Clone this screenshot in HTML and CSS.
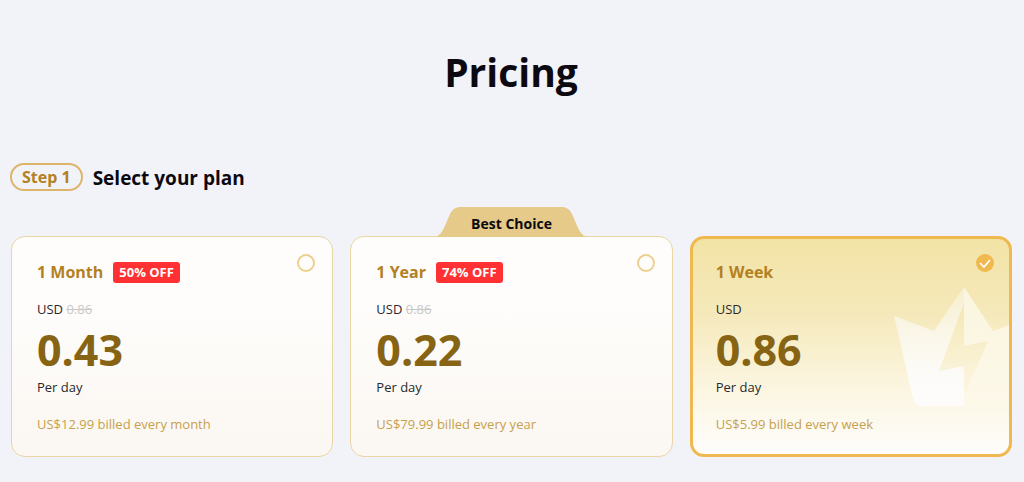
FILE: index.html
```html
<!DOCTYPE html>
<html lang="en">
<head>
<meta charset="utf-8">
<meta name="viewport" content="width=device-width, initial-scale=1">
<title>Pricing</title>
<link rel="stylesheet" href="styles.css">
</head>
<body>
<main class="pricing">
  <h1 class="page-title">Pricing</h1>
  <form>
    <header class="step">
      <span class="step-badge">Step 1</span>
      <h2 class="step-title">Select your plan</h2>
    </header>
    <div class="plans">
      <label class="plan" for="month">
        <span class="plan-head">
          <span class="plan-name">1 Month</span>
          <span class="discount">50% OFF</span>
          <input class="plan-radio" type="radio" name="plan" id="month">
        </span>
        <span class="currency">USD <s class="old-price">0.86</s></span>
        <span class="price">0.43</span>
        <span class="period">Per day</span>
        <span class="billing">US$12.99 billed every month</span>
      </label>
      <label class="plan" for="year">
        <span class="best">
          <svg class="best-shape" viewBox="0 0 150 30" preserveAspectRatio="none" aria-hidden="true"><path d="M0 30C4 28 6 25 8 21L14 7C17 2 19 0 25 0H125C131 0 133 2 136 7L142 21C144 25 146 28 150 30Z" fill="#e5ca89"/></svg>
          <span class="best-text">Best Choice</span>
        </span>
        <span class="plan-head">
          <span class="plan-name">1 Year</span>
          <span class="discount">74% OFF</span>
          <input class="plan-radio" type="radio" name="plan" id="year">
        </span>
        <span class="currency">USD <s class="old-price">0.86</s></span>
        <span class="price">0.22</span>
        <span class="period">Per day</span>
        <span class="billing">US$79.99 billed every year</span>
      </label>
      <label class="plan plan-selected" for="week">
        <svg class="crown" viewBox="0 0 116 120" aria-hidden="true">
          <defs>
            <linearGradient id="crown-left" x1="0" y1="0" x2="0" y2="1">
              <stop offset="0" stop-color="#fcfaf6" stop-opacity=".4"/>
              <stop offset=".85" stop-color="#fdfcfb"/>
            </linearGradient>
          </defs>
          <path fill="url(#crown-left)" d="M71 1V17L46 85L71 80V120H29Q22 120 20 112L1 30L41 45Z"/>
          <path fill="#fcf9ea" fill-opacity=".8" d="M71 1L100 45L141 30L121 120H71V110L95 55L71 60Z"/>
        </svg>
        <span class="plan-head">
          <span class="plan-name">1 Week</span>
          <input class="plan-radio" type="radio" name="plan" id="week" checked>
          <svg class="tick" viewBox="0 0 18 18" aria-hidden="true"><path d="M4 9L8 13L14 6" fill="none" stroke="#fff" stroke-width="1.7"/></svg>
        </span>
        <span class="currency">USD</span>
        <span class="price">0.86</span>
        <span class="period">Per day</span>
        <span class="billing">US$5.99 billed every week</span>
      </label>
    </div>
  </form>
</main>
</body>
</html>
```

FILE: styles.css
```css
* { box-sizing: border-box; }

body {
  margin: 0;
  background: #f2f3f8;
  color: #0c0a10;
  font-family: "Segoe UI", "Open Sans", "Noto Sans", sans-serif;
}

.pricing { padding: 44px 12px 26px 10px; }

.page-title {
  margin: 0;
  text-align: center;
  font-size: 39px;
  line-height: 56px;
  font-weight: 700;
}

.step {
  display: flex;
  align-items: center;
  gap: 10px;
  margin: 62px 0 44px;
}

.step-badge {
  padding: 0 10px;
  border: 2px solid #dcb56b;
  border-radius: 14px;
  color: #b38022;
  font-size: 16px;
  line-height: 24px;
  font-weight: 700;
}

.step-title {
  margin: 0;
  padding-top: 2px;
  font-size: 19px;
  line-height: 28px;
  font-weight: 700;
}

.plans {
  display: grid;
  grid-template-columns: repeat(3, 1fr);
  gap: 17px;
  padding-left: 1px;
}

.plan {
  position: relative;
  display: flex;
  flex-direction: column;
  padding: 24px 17px 22px 25px;
  border: 1px solid #ead6a3;
  border-radius: 14px;
  background: linear-gradient(#fefdfb 30%, #fbf7f2);
  cursor: pointer;
}

.plan-selected {
  padding: 22px 15px 20px 23px;
  border: 3px solid #f0b94f;
  background: linear-gradient(#f2e3a5, #f5e9bb 35%, #fbf4dc 65%, #fefdfc);
}

.plan-head {
  position: relative;
  display: flex;
  align-items: center;
  gap: 10px;
  margin-bottom: 15px;
  line-height: 22px;
}

.plan-name {
  color: #b38022;
  font-size: 16px;
  font-weight: 700;
}

.discount {
  padding: 0 6px;
  border-radius: 3px;
  background: #ff3133;
  color: #fff;
  font-size: 13px;
  line-height: 21px;
  font-weight: 700;
}

.plan-radio {
  appearance: none;
  align-self: flex-start;
  width: 18px;
  height: 18px;
  margin: -7px 0 0 auto;
  border: 2px solid #edcf8e;
  border-radius: 50%;
}

.plan-radio:checked {
  border: 0;
  background: #f0b94f;
}

.tick {
  position: absolute;
  top: -7px;
  right: 0;
  width: 18px;
  height: 18px;
  pointer-events: none;
}

.currency, .period, .billing {
  font-size: 13px;
  line-height: 20px;
}

.currency, .period { color: #28292d; }

.old-price { color: #c8c8c8; }

.price {
  margin-top: 4px;
  color: #866414;
  font-size: 43px;
  line-height: 54px;
  font-weight: 700;
}

.currency { padding-top: 1px; }

.billing {
  margin-top: 17px;
  color: #c6a04f;
}

.best {
  position: absolute;
  bottom: 100%;
  left: 50%;
  width: 150px;
  height: 30px;
  transform: translateX(-50%);
  text-align: center;
}

.best-shape {
  position: absolute;
  inset: 0;
  width: 100%;
  height: 100%;
}

.best-text {
  position: relative;
  font-size: 14px;
  line-height: 34px;
  font-weight: 700;
}

.crown {
  position: absolute;
  top: 47px;
  right: 0;
  width: 116px;
  height: 120px;
}
```
